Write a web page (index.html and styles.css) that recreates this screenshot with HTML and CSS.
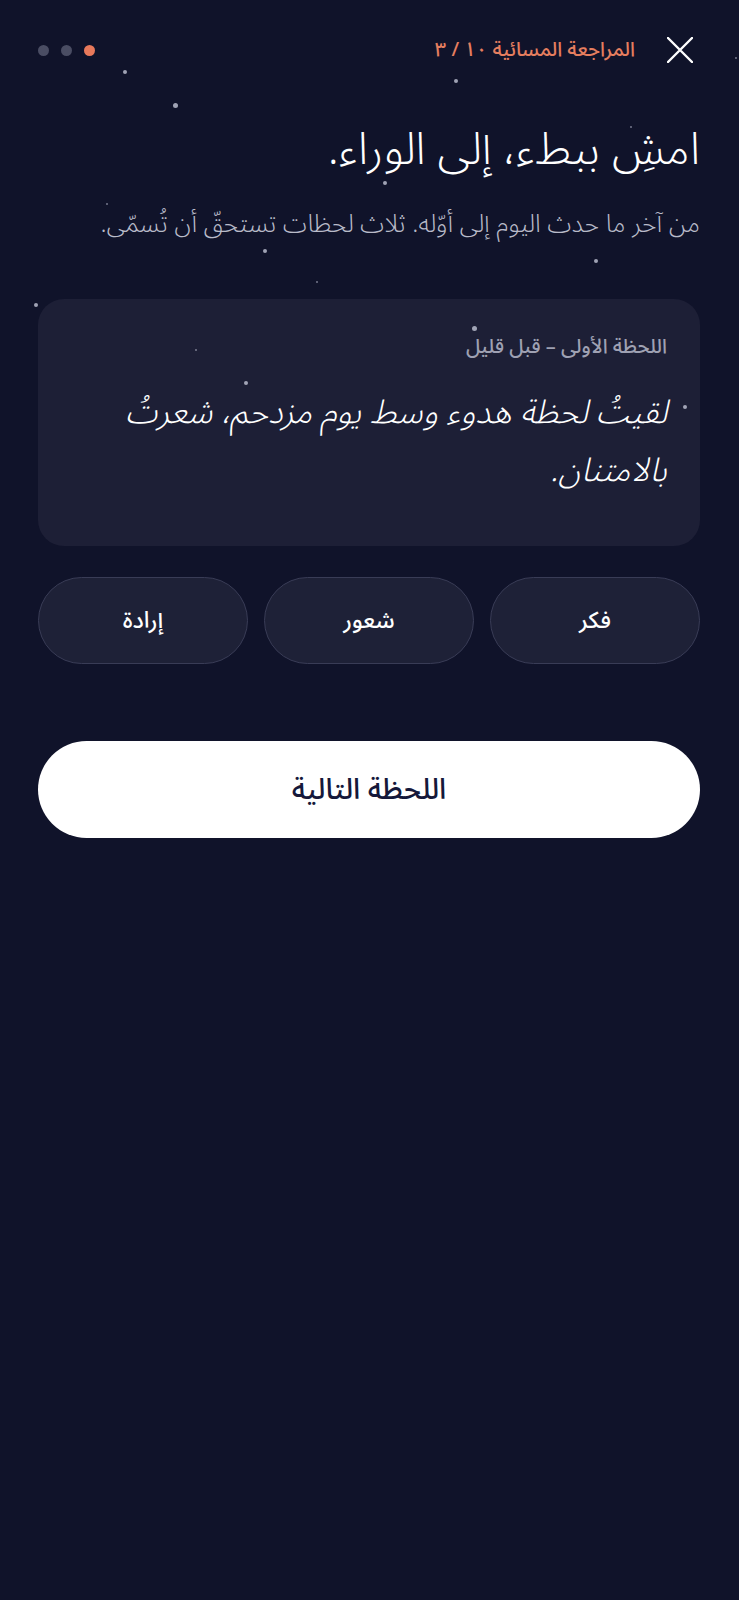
FILE: index.html
```html
<!DOCTYPE html>
<html lang="ar" dir="rtl">

<head>
  <meta charset="UTF-8">
  <meta name="viewport" content="width=device-width, initial-scale=1.0">
  <title>المراجعة المسائية</title>
  <link rel="stylesheet" href="styles.css">
</head>

<body>
  <div class="stars" aria-hidden="true">
    <span class="star" style="left:125px;top:72px"></span>
    <span class="star" style="left:456px;top:81px"></span>
    <span class="star big" style="left:175px;top:105px"></span>
    <span class="star tiny" style="left:736px;top:58px"></span>
    <span class="star tiny" style="left:631px;top:127px"></span>
    <span class="star" style="left:385px;top:183px"></span>
    <span class="star tiny" style="left:107px;top:204px"></span>
    <span class="star" style="left:265px;top:251px"></span>
    <span class="star" style="left:596px;top:261px"></span>
    <span class="star tiny" style="left:317px;top:282px"></span>
    <span class="star" style="left:36px;top:305px"></span>
    <span class="star big" style="left:474px;top:328px"></span>
    <span class="star tiny" style="left:196px;top:350px"></span>
    <span class="star" style="left:246px;top:383px"></span>
    <span class="star" style="left:685px;top:407px"></span>
  </div>

  <main class="screen">
    <header class="topbar">
      <button class="close" aria-label="إغلاق">
        <svg width="26" height="26" viewBox="0 0 26 26">
          <path d="M1 1 L25 25 M25 1 L1 25" stroke="#ffffff" stroke-width="2.4" stroke-linecap="round" fill="none"/>
        </svg>
      </button>
      <div class="step">المراجعة المسائية ١٠ / ٣</div>
      <div class="dots">
        <span class="dot active"></span>
        <span class="dot"></span>
        <span class="dot"></span>
      </div>
    </header>

    <h1 class="title">امشِ ببطء، إلى الوراء.</h1>
    <p class="subtitle">من آخر ما حدث اليوم إلى أوّله. ثلاث لحظات تستحقّ أن تُسمّى.</p>

    <section class="card">
      <div class="card-label">اللحظة الأولى – قبل قليل</div>
      <p class="quote">لقيتُ لحظة هدوء وسط يوم مزدحم، شعرتُ بالامتنان.</p>
    </section>

    <div class="chips">
      <button class="chip">فكر</button>
      <button class="chip">شعور</button>
      <button class="chip">إرادة</button>
    </div>

    <button class="next">اللحظة التالية</button>
  </main>
</body>

</html>
```

FILE: styles.css
```css
* {
  box-sizing: border-box;
}

body {
  margin: 0;
  min-height: 1600px;
  background-color: #10132a;
  color: #ffffff;
  font-family: "Noto Sans Arabic", "Noto Sans", "DejaVu Sans", sans-serif;
  position: relative;
}

.stars {
  position: absolute;
  inset: 0;
  pointer-events: none;
  z-index: 2;
}

.star {
  position: absolute;
  width: 4px;
  height: 4px;
  margin: -2px 0 0 -2px;
  border-radius: 50%;
  background: #b9bccd;
  opacity: 0.85;
}

.star.big {
  width: 5px;
  height: 5px;
}

.star.tiny {
  width: 2px;
  height: 2px;
  margin: -1px 0 0 -1px;
  opacity: 0.6;
}

.screen {
  padding: 30px 39px 0 38px;
}

.topbar {
  display: flex;
  align-items: center;
  height: 40px;
}

.close {
  background: none;
  border: none;
  padding: 0;
  width: 26px;
  height: 26px;
  margin-right: 7px;
  cursor: pointer;
}

.close svg {
  display: block;
}

.step {
  margin-right: 32px;
  font-size: 20px;
  font-weight: 500;
  color: #e57e5f;
}

.dots {
  margin-right: auto;
  display: flex;
  gap: 12px;
}

.dot {
  width: 11px;
  height: 11px;
  border-radius: 50%;
  background: #4a4d63;
}

.dot.active {
  background: #e8795b;
}

.title {
  margin: 50px 0 0;
  font-size: 45px;
  font-weight: 300;
  line-height: 60px;
}

.subtitle {
  margin: 26px 0 0;
  font-size: 25px;
  font-weight: 300;
  line-height: 36px;
  color: #b9bbc9;
}

.card {
  margin-top: 57px;
  background: #1d1f36;
  border-radius: 26px;
  padding: 34px 33px 46px;
}

.card-label {
  font-size: 20px;
  font-weight: 500;
  line-height: 28px;
  color: #9fa1b3;
}

.quote {
  margin: 23px 0 0;
  font-size: 33px;
  font-weight: 300;
  font-style: italic;
  line-height: 58px;
  color: #ffffff;
}

.chips {
  margin-top: 31px;
  display: grid;
  grid-template-columns: repeat(3, 1fr);
  gap: 16px;
}

.chip {
  height: 87px;
  border-radius: 44px;
  border: 1.5px solid #393c56;
  background: #1e2137;
  color: #ffffff;
  font-family: inherit;
  font-size: 23px;
  font-weight: 500;
  cursor: pointer;
}

.next {
  display: block;
  width: 100%;
  margin-top: 77px;
  height: 97px;
  border: none;
  border-radius: 49px;
  background: #ffffff;
  color: #15183a;
  font-family: inherit;
  font-size: 29px;
  font-weight: 500;
  cursor: pointer;
}
```
